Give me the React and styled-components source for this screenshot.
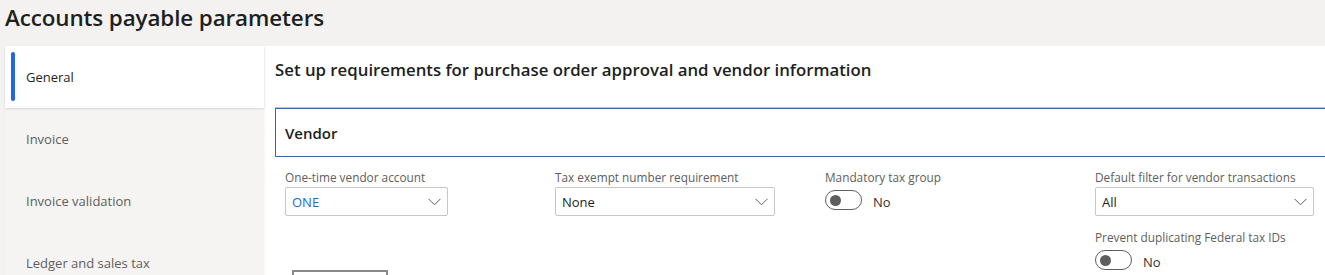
import React from 'react'
import styled, { createGlobalStyle } from 'styled-components'

const GlobalStyle = createGlobalStyle`
  html, body {
    margin: 0;
    padding: 0;
    background: #f3f2f1;
    font-family: 'Open Sans', 'Noto Sans', sans-serif;
    color: #323130;
    overflow: hidden;
  }
`

const Page = styled.div`
  width: 1325px;
  height: 275px;
  overflow: hidden;
`

const Title = styled.h1`
  margin: 0;
  height: 46px;
  padding-left: 5px;
  font-size: 22.4px;
  font-weight: 600;
  line-height: 36px;
  color: #201f1e;
  letter-spacing: -0.1px;
`

const Body = styled.div`
  display: flex;
  margin-left: 5px;
  height: 229px;
`

const Sidebar = styled.nav`
  width: 259px;
  flex-shrink: 0;
  background: #f5f4f3;
  border-right: 2px solid #faf9f8;
`

const NavItem = styled.div`
  position: relative;
  height: 62px;
  display: flex;
  align-items: center;
  padding-left: 21px;
  font-size: 13px;
  color: ${p => (p.active ? '#201f1e' : '#605e5c')};
  background: ${p => (p.active ? '#fff' : 'transparent')};
  box-shadow: ${p => (p.active ? '0 1px 2px rgba(0,0,0,0.12)' : 'none')};
  &::before {
    content: '';
    display: ${p => (p.active ? 'block' : 'none')};
    position: absolute;
    left: 6px;
    top: 6px;
    bottom: 7px;
    width: 4px;
    border-radius: 2px;
    background: #2266e3;
  }
`

const Main = styled.main`
  flex: 1;
  background: #fff;
  padding-left: 9px;
`

const Heading = styled.h2`
  margin: 0;
  height: 62px;
  padding-top: 12px;
  box-sizing: border-box;
  font-size: 16.8px;
  line-height: 24px;
  font-weight: 600;
  color: #201f1e;
  border-bottom: 1px solid #c8c6c4;
`

const SectionHeader = styled.div`
  height: 49px;
  box-sizing: border-box;
  border: 1px solid #2266e3;
  border-right: none;
  display: flex;
  align-items: center;
  padding-left: 9px;
  font-size: 15px;
  font-weight: 600;
  color: #201f1e;
`

const Fields = styled.div`
  display: grid;
  grid-template-columns: repeat(4, 270px);
  align-items: start;
  padding: 12px 0 0 10px;
`

const Field = styled.div`
  display: flex;
  flex-direction: column;
  gap: 13px;
`

const Group = styled.div`
  display: flex;
  flex-direction: column;
`

const Label = styled.div`
  font-size: 11.8px;
  line-height: 16px;
  color: #605e5c;
  padding-bottom: 2px;
`

const Select = styled.div`
  width: ${p => p.w}px;
  height: 29px;
  box-sizing: border-box;
  border: 1px solid #c8c6c4;
  border-radius: 2px;
  display: flex;
  align-items: center;
  justify-content: space-between;
  padding: 0 6px 0 6px;
  font-size: 13px;
  color: ${p => (p.link ? '#2266e3' : '#201f1e')};
`

const ToggleRow = styled.div`
  display: flex;
  align-items: center;
  gap: 11px;
  height: 26px;
  font-size: 13px;
  color: #323130;
  span:last-child {
    padding-top: 3px;
  }
`

const Track = styled.span`
  width: 37px;
  height: 20px;
  box-sizing: border-box;
  border: 1px solid #605e5c;
  border-radius: 10px;
  display: flex;
  align-items: center;
  padding-left: 4px;
  &::after {
    content: '';
    width: 11px;
    height: 11px;
    border-radius: 50%;
    background: #605e5c;
  }
`

const Button = styled.div`
  margin: 41px 0 0 7px;
  width: 96px;
  height: 30px;
  box-sizing: border-box;
  border: 2px solid #8a8886;
`

const Chevron = () => (
  <svg width="13" height="8" viewBox="0 0 13 8">
    <polyline points="0.5,0.8 6.5,6.8 12.5,0.8" fill="none" stroke="#605e5c" strokeWidth="1" />
  </svg>
)

const Dropdown = ({ w, value, link }) => (
  <Select w={w} link={link}>
    <span>{value}</span>
    <Chevron />
  </Select>
)

const Toggle = ({ value }) => (
  <ToggleRow>
    <Track />
    <span>{value}</span>
  </ToggleRow>
)

const navItems = ['General', 'Invoice', 'Invoice validation', 'Ledger and sales tax']

export default function App() {
  return (
    <Page>
      <GlobalStyle />
      <Title>Accounts payable parameters</Title>
      <Body>
        <Sidebar>
          {navItems.map((n, i) => (
            <NavItem key={n} active={i === 0}>{n}</NavItem>
          ))}
        </Sidebar>
        <Main>
          <Heading>Set up requirements for purchase order approval and vendor information</Heading>
          <SectionHeader>Vendor</SectionHeader>
          <Fields>
            <Field>
              <Group>
                <Label>One-time vendor account</Label>
                <Dropdown w={163} value="ONE" link />
              </Group>
              <Button />
            </Field>
            <Field>
              <Group>
                <Label>Tax exempt number requirement</Label>
                <Dropdown w={220} value="None" />
              </Group>
            </Field>
            <Field>
              <Group>
                <Label>Mandatory tax group</Label>
                <Toggle value="No" />
              </Group>
            </Field>
            <Field>
              <Group>
                <Label>Default filter for vendor transactions</Label>
                <Dropdown w={219} value="All" />
              </Group>
              <Group>
                <Label>Prevent duplicating Federal tax IDs</Label>
                <Toggle value="No" />
              </Group>
            </Field>
          </Fields>
        </Main>
      </Body>
    </Page>
  )
}
